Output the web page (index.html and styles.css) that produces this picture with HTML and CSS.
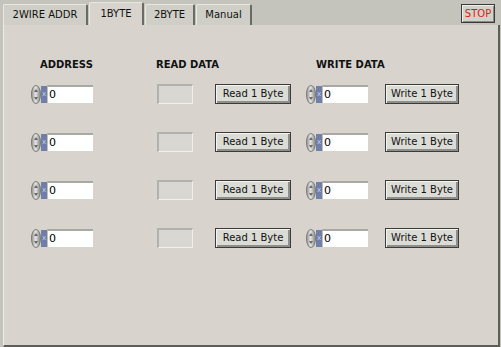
FILE: index.html
```html
<!DOCTYPE html>
<html>
<head>
  <meta charset="utf-8"/>
  <title>1BYTE</title>
  <link rel="stylesheet" href="styles.css">
</head>
<body>

  <!-- ---------- TAB BAR ---------- -->
  <div class="tabbar">
    <div class="tab">2WIRE ADDR</div>
    <div class="tab active">1BYTE</div>
    <div class="tab">2BYTE</div>
    <div class="tab">Manual</div>
    <button class="btn-stop">STOP</button>
  </div>

  <!-- ---------- PANEL ---------- -->
  <div class="panel">
    <div class="cols heads">
      <div class="head h-addr">ADDRESS</div>
      <div class="head h-read">READ DATA</div>
      <div class="head h-write">WRITE DATA</div>
    </div>

    <div class="cols rows">
      <!-- row 1 -->
      <div class="numctl"><span class="spin"></span><span class="radix">x</span><span class="num">0</span></div>
      <div class="indicator"></div>
      <button class="btn">Read 1 Byte</button>
      <div class="numctl"><span class="spin"></span><span class="radix">x</span><span class="num">0</span></div>
      <button class="btn">Write 1 Byte</button>

      <!-- row 2 -->
      <div class="numctl"><span class="spin"></span><span class="radix">x</span><span class="num">0</span></div>
      <div class="indicator"></div>
      <button class="btn">Read 1 Byte</button>
      <div class="numctl"><span class="spin"></span><span class="radix">x</span><span class="num">0</span></div>
      <button class="btn">Write 1 Byte</button>

      <!-- row 3 -->
      <div class="numctl"><span class="spin"></span><span class="radix">x</span><span class="num">0</span></div>
      <div class="indicator"></div>
      <button class="btn">Read 1 Byte</button>
      <div class="numctl"><span class="spin"></span><span class="radix">x</span><span class="num">0</span></div>
      <button class="btn">Write 1 Byte</button>

      <!-- row 4 -->
      <div class="numctl"><span class="spin"></span><span class="radix">x</span><span class="num">0</span></div>
      <div class="indicator"></div>
      <button class="btn">Read 1 Byte</button>
      <div class="numctl"><span class="spin"></span><span class="radix">x</span><span class="num">0</span></div>
      <button class="btn">Write 1 Byte</button>
    </div>
  </div>

</body>
</html>
```

FILE: styles.css
```css
/* Basic reset */
* {
  box-sizing: border-box;
  margin: 0;
  padding: 0;
}
body {
  font-family: 'DejaVu Sans', Tahoma, sans-serif;
  font-size: 10px;
  color: #111;
  background: #c4c4bc;
  width: 501px;
  height: 347px;
  overflow: hidden;
}

/* ---------- TAB BAR ---------- */
.tabbar {
  display: flex;
  align-items: flex-end;
  height: 25px;
  padding-left: 3px;
  padding-right: 6px;
}
.tab {
  height: 21px;
  line-height: 20px;
  white-space: nowrap;
  text-align: center;
  background: #cfcfc7;
  border-top: 1px solid #e8e8e2;
  border-left: 1px solid #e8e8e2;
  border-right: 2px solid #6a6a66;
  border-radius: 2px 2px 0 0;
  margin-right: 1px;
}
.tab:first-child { width: 85px; }
.tab.active {
  height: 23px;
  line-height: 22px;
  background: #d8d4cd;
  width: 55px;
}
.tab:nth-child(3) { width: 50px; }
.tab:nth-child(4) { width: 56px; }
.btn-stop {
  margin-left: auto;
  align-self: flex-start;
  margin-top: 4px;
  width: 34px;
  height: 19px;
  font-family: inherit;
  font-size: 10px;
  color: #e01818;
  background: #d2d2ca;
  border: 1px solid #3a3a3a;
  box-shadow: inset 1px 1px 0 #f0f0ea, inset -1px -1px 0 #8a8a84;
}

/* ---------- PANEL ---------- */
.panel {
  height: 322px;
  margin-left: 3px;
  margin-right: 1px;
  background: #d8d4cd;
  border-left: 1px solid #eeece6;
  border-right: 2px solid #5e5e58;
  border-bottom: 2px solid #5e5e58;
  padding-top: 33px;
  padding-left: 27px;
}
.cols {
  display: grid;
  grid-template-columns: 126px 58px 91px 79px 73px;
}
.heads {
  height: 14px;
  margin-bottom: 12px;
}
.head {
  font-weight: bold;
  font-size: 10px;
  line-height: 14px;
}
.h-addr { padding-left: 9px; }
.h-read { grid-column: 2 / span 2; margin-left: -1px; }
.h-write { grid-column: 4 / span 2; padding-left: 10px; }

.rows {
  grid-auto-rows: 20px;
  row-gap: 28px;
  align-items: center;
}

/* numeric control: spinner + radix + field */
.numctl {
  display: flex;
  align-items: center;
  height: 20px;
}
.spin {
  position: relative;
  width: 10px;
  height: 19px;
  border-radius: 5px / 9px;
  background: linear-gradient(90deg, #9a9a98, #e4e4e2 45%, #8c8c8a);
  border: 1px solid #7c7c7a;
}
.spin::before,
.spin::after {
  content: "";
  position: absolute;
  left: 2px;
  border-left: 2px solid transparent;
  border-right: 2px solid transparent;
}
.spin::before {
  top: 3px;
  border-bottom: 3px solid #6a6a68;
}
.spin::after {
  bottom: 3px;
  border-top: 3px solid #6a6a68;
}
.radix {
  width: 6px;
  height: 17px;
  background: #6f7fa8;
  color: #c8d0e6;
  font-size: 7px;
  line-height: 17px;
  text-align: center;
  overflow: hidden;
}
.num {
  width: 46px;
  height: 18px;
  background: #fff;
  border-top: 2px solid #a8a8a4;
  border-left: 1px solid #c0c0bc;
  font-size: 11px;
  line-height: 16px;
  padding-left: 1px;
  color: #000;
}

/* read data indicator (sunken, empty) */
.indicator {
  width: 36px;
  height: 20px;
  background: #d9d7d2;
  border-top: 2px solid #b0b0ac;
  border-left: 2px solid #b0b0ac;
  border-bottom: 1px solid #eeeeea;
  border-right: 1px solid #eeeeea;
}

/* buttons */
.btn {
  height: 20px;
  font-family: inherit;
  font-size: 10px;
  color: #111;
  background: #dcdcd6;
  border: 1px solid #3c3c3c;
  box-shadow: inset 1px 1px 0 #f4f4f0, inset -2px -2px 0 #8e8e8a;
  padding-bottom: 1px;
}
.rows .btn:nth-child(5n+3) { width: 76px; }
.rows .btn:nth-child(5n) { width: 74px; }
```
